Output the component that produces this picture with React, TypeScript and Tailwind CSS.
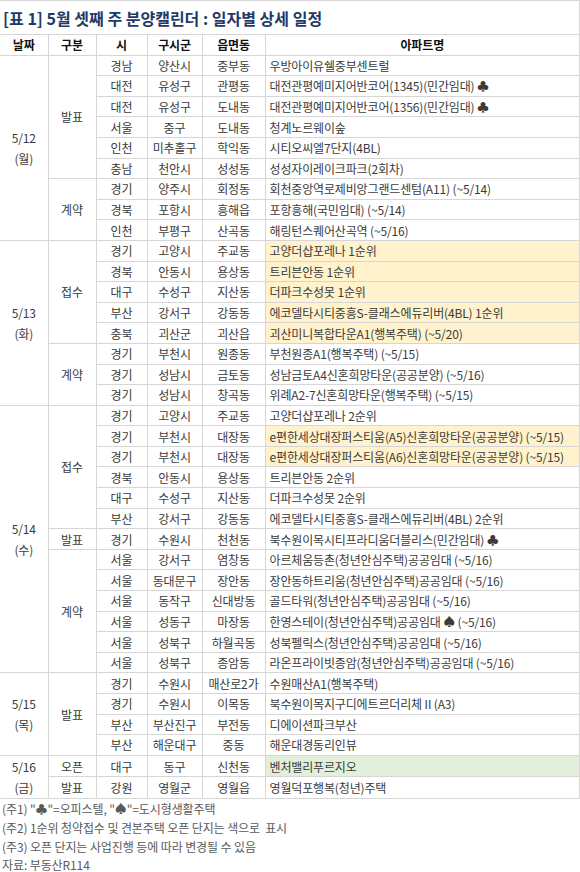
import * as React from "react"

type Row = { si: string; gu: string; dong: string; apt: string; hl?: "y" | "g" }
type Cat = { cat: string; rows: Row[] }
type Day = { date: string; day: string; cats: Cat[] }

const r = (si: string, gu: string, dong: string, apt: string, hl?: "y" | "g"): Row => ({ si, gu, dong, apt, hl })

const days: Day[] = [
    {
        date: "5/12", day: "(월)", cats: [
            {
                cat: "발표", rows: [
                    r("경남", "양산시", "중부동", "우방아이유쉘중부센트럴"),
                    r("대전", "유성구", "관평동", "대전관평예미지어반코어(1345)(민간임대) ♣"),
                    r("대전", "유성구", "도내동", "대전관평예미지어반코어(1356)(민간임대) ♣"),
                    r("서울", "중구", "도내동", "청계노르웨이숲"),
                    r("인천", "미추홀구", "학익동", "시티오씨엘7단지(4BL)"),
                    r("충남", "천안시", "성성동", "성성자이레이크파크(2회차)"),
                ]
            },
            {
                cat: "계약", rows: [
                    r("경기", "양주시", "회정동", "회천중앙역로제비앙그랜드센텀(A11) (~5/14)"),
                    r("경북", "포항시", "흥해읍", "포항흥해(국민임대) (~5/14)"),
                    r("인천", "부평구", "산곡동", "해링턴스퀘어산곡역 (~5/16)"),
                ]
            },
        ]
    },
    {
        date: "5/13", day: "(화)", cats: [
            {
                cat: "접수", rows: [
                    r("경기", "고양시", "주교동", "고양더샵포레나 1순위", "y"),
                    r("경북", "안동시", "용상동", "트리븐안동 1순위", "y"),
                    r("대구", "수성구", "지산동", "더파크수성못 1순위", "y"),
                    r("부산", "강서구", "강동동", "에코델타시티중흥S-클래스에듀리버(4BL) 1순위", "y"),
                    r("충북", "괴산군", "괴산읍", "괴산미니복합타운A1(행복주택) (~5/20)", "y"),
                ]
            },
            {
                cat: "계약", rows: [
                    r("경기", "부천시", "원종동", "부천원종A1(행복주택) (~5/15)"),
                    r("경기", "성남시", "금토동", "성남금토A4신혼희망타운(공공분양) (~5/16)"),
                    r("경기", "성남시", "창곡동", "위례A2-7신혼희망타운(행복주택) (~5/15)"),
                ]
            },
        ]
    },
    {
        date: "5/14", day: "(수)", cats: [
            {
                cat: "접수", rows: [
                    r("경기", "고양시", "주교동", "고양더샵포레나 2순위"),
                    r("경기", "부천시", "대장동", "e편한세상대장퍼스티움(A5)신혼희망타운(공공분양) (~5/15)", "y"),
                    r("경기", "부천시", "대장동", "e편한세상대장퍼스티움(A6)신혼희망타운(공공분양) (~5/15)", "y"),
                    r("경북", "안동시", "용상동", "트리븐안동 2순위"),
                    r("대구", "수성구", "지산동", "더파크수성못 2순위"),
                    r("부산", "강서구", "강동동", "에코델타시티중흥S-클래스에듀리버(4BL) 2순위"),
                ]
            },
            {
                cat: "발표", rows: [
                    r("경기", "수원시", "천천동", "북수원이목시티프라디움더블리스(민간임대) ♣"),
                ]
            },
            {
                cat: "계약", rows: [
                    r("서울", "강서구", "염창동", "아르체움등촌(청년안심주택)공공임대 (~5/16)"),
                    r("서울", "동대문구", "장안동", "장안동하트리움(청년안심주택)공공임대 (~5/16)"),
                    r("서울", "동작구", "신대방동", "골드타워(청년안심주택)공공임대 (~5/16)"),
                    r("서울", "성동구", "마장동", "한영스테이(청년안심주택)공공임대 ♠ (~5/16)"),
                    r("서울", "성북구", "하월곡동", "성북펠릭스(청년안심주택)공공임대 (~5/16)"),
                    r("서울", "성북구", "종암동", "라온프라이빗종암(청년안심주택)공공임대 (~5/16)"),
                ]
            },
        ]
    },
    {
        date: "5/15", day: "(목)", cats: [
            {
                cat: "발표", rows: [
                    r("경기", "수원시", "매산로2가", "수원매산A1(행복주택)"),
                    r("경기", "수원시", "이목동", "북수원이목지구디에트르더리체Ⅱ(A3)"),
                    r("부산", "부산진구", "부전동", "디에이션파크부산"),
                    r("부산", "해운대구", "중동", "해운대경동리인뷰"),
                ]
            },
        ]
    },
    {
        date: "5/16", day: "(금)", cats: [
            { cat: "오픈", rows: [r("대구", "동구", "신천동", "벤처밸리푸르지오", "g")] },
            { cat: "발표", rows: [r("강원", "영월군", "영월읍", "영월덕포행복(청년)주택")] },
        ]
    },
]

const notes = [
    "(주1) \"♣\"=오피스텔, \"♠\"=도시형생활주택",
    "(주2) 1순위 청약접수 및 견본주택 오픈 단지는 색으로\u00a0\u00a0표시",
    "(주3) 오픈 단지는 사업진행 등에 따라 변경될 수 있음",
]

const cell = "border border-[#d6d6d6] p-0 h-[20.6px] leading-[19px] text-center"

export default function App() {
    return (
        <div className="w-[580px] bg-white text-[12px] tracking-[-0.15px] text-[#3b3b3b] font-['Noto_Sans_CJK_KR',sans-serif]">
            <div className="h-[34px] border-t border-r border-[#d6d6d6] flex items-center pl-[3px]">
                <span className="text-[16px] font-bold tracking-[0px] text-[#1f3a68]">
                    [표 1] 5월 셋째 주 분양캘린더 : 일자별 상세 일정
                </span>
            </div>

            <table className="w-full table-fixed border-collapse">
                <colgroup>
                    <col className="w-[48px]"/>
                    <col className="w-[48px]"/>
                    <col className="w-[51px]"/>
                    <col className="w-[55px]"/>
                    <col className="w-[63px]"/>
                    <col/>
                </colgroup>
                <thead>
                    <tr className="font-bold text-[#111]">
                        <th className={`${cell} border-l-0 h-[18px]`}>날짜</th>
                        <th className={`${cell} h-[18px]`}>구분</th>
                        <th className={`${cell} h-[18px]`}>시</th>
                        <th className={`${cell} h-[18px]`}>구시군</th>
                        <th className={`${cell} h-[18px]`}>읍면동</th>
                        <th className={`${cell} h-[18px]`}>아파트명</th>
                    </tr>
                </thead>
                <tbody>
                    {days.map((d) => {
                        const total = d.cats.reduce((n, c) => n + c.rows.length, 0)
                        return d.cats.map((c, ci) =>
                            c.rows.map((row, ri) => (
                                <tr key={`${d.date}-${ci}-${ri}`}>
                                    {ci === 0 && ri === 0 && (
                                        <td rowSpan={total} className={`${cell} border-l-0 leading-[21px]`}>
                                            {d.date}<br/>{d.day}
                                        </td>
                                    )}
                                    {ri === 0 && (
                                        <td rowSpan={c.rows.length} className={cell}>{c.cat}</td>
                                    )}
                                    <td className={cell}>{row.si}</td>
                                    <td className={cell}>{row.gu}</td>
                                    <td className={cell}>{row.dong}</td>
                                    <td
                                        className={`${cell} text-left pl-[4px] whitespace-nowrap overflow-hidden ${
                                            row.hl === "y" ? "bg-[#fff2cc]" : row.hl === "g" ? "bg-[#e2efda]" : ""
                                        }`}
                                    >
                                        {row.apt}
                                    </td>
                                </tr>
                            ))
                        )
                    })}
                </tbody>
            </table>

            <div className="flex flex-col text-[12px] tracking-[-0.1px] text-[#5a5a5a]">
                {notes.map((n) => (
                    <div key={n} className="h-[19px] leading-[19px] pl-[2px]">{n}</div>
                ))}
                <div className="h-[17px] leading-[17px] pl-[2px]">자료: 부동산R114</div>
            </div>
        </div>
    )
}
